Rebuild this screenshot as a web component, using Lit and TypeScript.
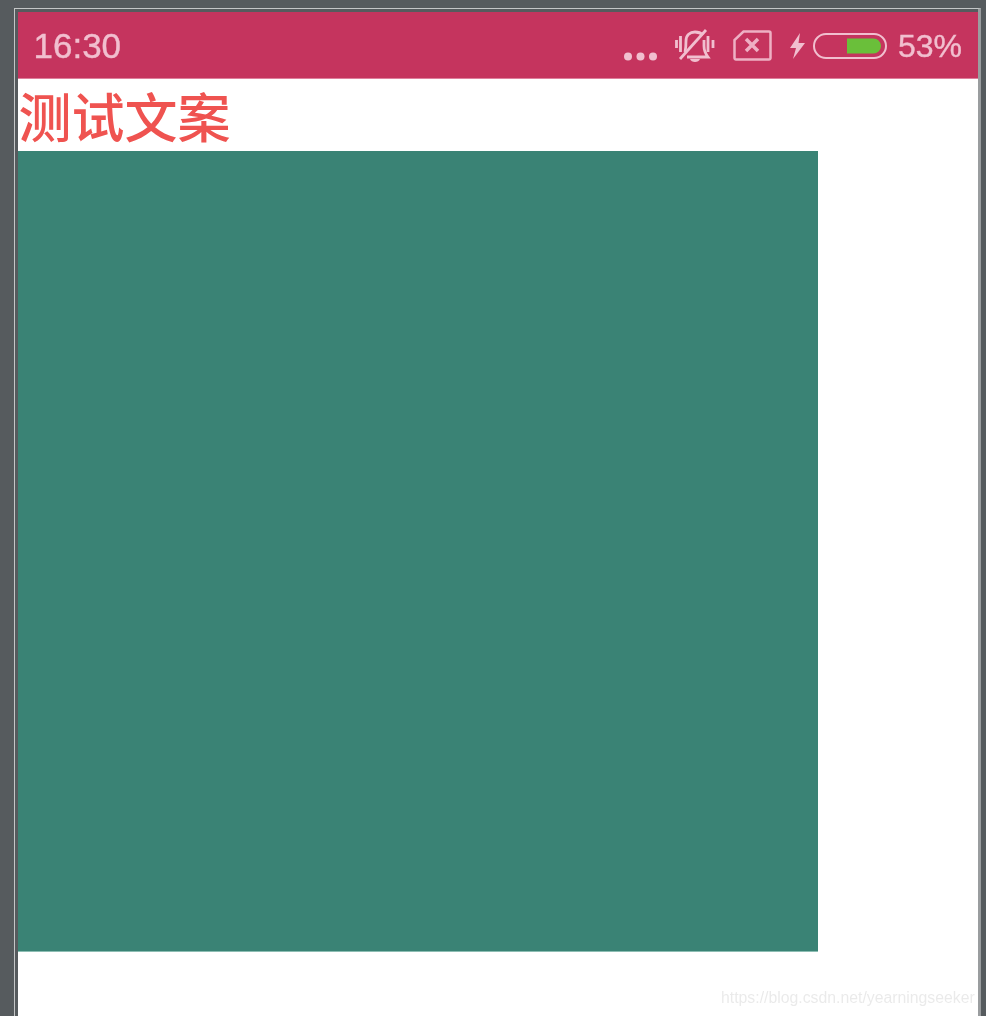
import { LitElement, html, css } from "lit";
import { customElement } from "lit/decorators.js";

@customElement("app-root")
export class AppRoot extends LitElement {
  static styles = css`
    :host {
      display: block;
      width: 986px;
      height: 1016px;
      overflow: hidden;
      background: #565b5e;
      box-sizing: border-box;
      padding: 8px 5px 0 14px;
      position: relative;
      font-family: "Liberation Sans", Arial, sans-serif;
    }
    .frame {
      height: 1008px;
      box-sizing: border-box;
      border-top: 1.5px solid #c4c6c7;
      border-left: 1.5px solid #c4c6c7;
      border-right: 3px solid #9a9d9f;
      padding: 3px 0 0 2.5px;
      display: flex;
      flex-direction: column;
    }
    .screen {
      flex: 1;
      background: #fff;
      display: flex;
      flex-direction: column;
      min-height: 0;
    }
    .status {
      height: 67px;
      flex: none;
      background: #c5345e;
      color: #f1bfcf;
      display: flex;
      align-items: center;
      padding: 0 16px;
      border-bottom: 1px solid #de7f9c;
      box-sizing: border-box;
    }
    .time {
      font-size: 35px;
      line-height: 1;
      flex: 1;
      filter: blur(0.5px);
      -webkit-text-stroke: 0.4px #f1bfcf;
    }
    .icons {
      display: flex;
      align-items: center;
      filter: blur(0.5px);
    }
    .icons svg { display: block; flex: none; }
    .dots { margin-right: 18px; margin-top: 23px; }
    .bell { margin-right: 18px; margin-top: 2px; }
    .sim { margin-right: 18px; }
    .bolt { margin-right: 7.5px; margin-top: 1px; }
    .battery { margin-top: 1px; }
    .pct {
      font-size: 32px;
      line-height: 1;
      margin-left: 11px;
      padding-top: 1px;
      -webkit-text-stroke: 0.4px #f1bfcf;
    }
    .caption {
      height: 72px;
      flex: none;
      font-family: "Noto Sans CJK SC", "Liberation Sans", sans-serif;
      font-size: 53px;
      font-weight: 500;
      line-height: 72px;
      color: #ef5350;
      padding-left: 1px;
      white-space: nowrap;
      filter: blur(0.5px);
    }
    .block {
      width: 800px;
      height: 801px;
      flex: none;
      background: #3a8375;
      border-bottom: 1px solid #8cbdb3;
      box-sizing: border-box;
    }
    .mark {
      position: absolute;
      left: 721px;
      top: 987px;
      font-size: 15.8px;
      line-height: 22px;
      color: rgba(60, 60, 60, 0.11);
      white-space: nowrap;
      filter: blur(0.3px);
    }
  `;

  render() {
    return html`
      <div class="frame">
        <div class="screen">
          <div class="status">
            <div class="time">16:30</div>
            <div class="icons">
              <svg class="dots" width="33" height="9" viewBox="0 0 33 9" fill="#f1bfcf">
                <circle cx="4" cy="4.500" r="4"></circle>
                <circle cx="16.500" cy="4.500" r="4"></circle>
                <circle cx="29" cy="4.500" r="4"></circle>
              </svg>
              <svg class="bell" width="40" height="34" viewBox="0 0 40 34" fill="none" stroke="#f1bfcf" stroke-width="2.800">
                <path d="M1.500 11v8M5.500 7v16M33 7v16M38 11v8"></path>
                <path d="M10 23C11 19 11 15 11 12 11 6 15 3 20 3 23 3 26 4 28 6"></path>
                <path d="M29 11V17C29 21 30 24 33 28H12"></path>
                <path d="M31 1 5 30"></path>
                <path d="M15 30H25C24 34 16 34 15 30Z" fill="#f1bfcf" stroke="none"></path>
              </svg>
              <svg class="sim" width="39" height="31" viewBox="0 0 39 31" fill="none" stroke="#eeb0c4" stroke-width="2.500">
                <path d="M10.500 1.500H36a1.500 1.500 0 0 1 1.500 1.500V28a1.500 1.500 0 0 1-1.500 1.500H3a1.500 1.500 0 0 1-1.500-1.500V10Z"></path>
                <path d="M13 9 25 21M25 9 13 21" stroke-width="3.500"></path>
              </svg>
              <svg class="bolt" width="15" height="26" viewBox="0 0 15 26" fill="#f1bfcf">
                <path d="M10 0 0 15H6L3 26 15 10H8.500Z"></path>
              </svg>
              <svg class="battery" width="74" height="26" viewBox="0 0 74 26">
                <rect x="1" y="1" width="72" height="24" rx="12" fill="none" stroke="#f1bfcf" stroke-width="2"></rect>
                <path d="M34 5.500H60a7.500 7.500 0 0 1 8 7.500 7.500 7.500 0 0 1-8 7.500H34Z" fill="#6abf3a"></path>
              </svg>
              <div class="pct">53%</div>
            </div>
          </div>
          <div class="caption">测试文案</div>
          <div class="block"></div>
        </div>
      </div>
      <div class="mark">https://blog.csdn.net/yearningseeker</div>
    `;
  }
}
